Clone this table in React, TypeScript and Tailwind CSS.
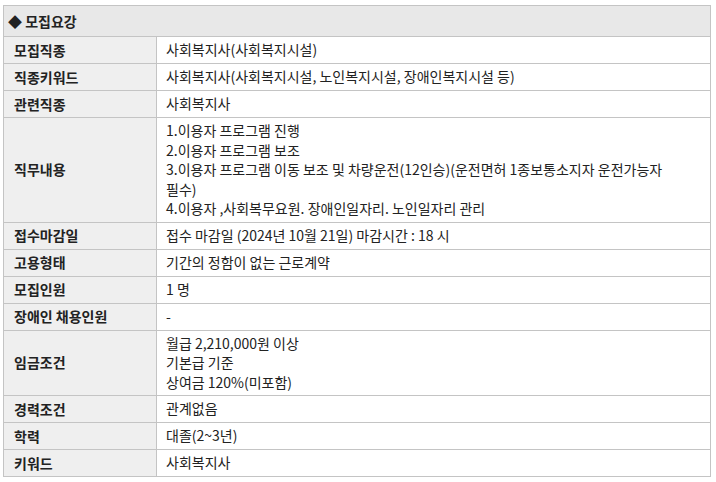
const rows: { label: string; lines: string[] }[] = [
  { label: '모집직종', lines: ['사회복지사(사회복지시설)'] },
  { label: '직종키워드', lines: ['사회복지사(사회복지시설, 노인복지시설, 장애인복지시설 등)'] },
  { label: '관련직종', lines: ['사회복지사'] },
  {
    label: '직무내용',
    lines: [
      '1.이용자 프로그램 진행',
      '2.이용자 프로그램 보조',
      '3.이용자 프로그램 이동 보조 및 차량운전(12인승)(운전면허 1종보통소지자 운전가능자',
      '필수)',
      '4.이용자 ,사회복무요원. 장애인일자리. 노인일자리 관리',
    ],
  },
  { label: '접수마감일', lines: ['접수 마감일 (2024년 10월 21일) 마감시간 : 18 시'] },
  { label: '고용형태', lines: ['기간의 정함이 없는 근로계약'] },
  { label: '모집인원', lines: ['1 명'] },
  { label: '장애인 채용인원', lines: ['-'] },
  { label: '임금조건', lines: ['월급 2,210,000원 이상', '기본급 기준', '상여금 120%(미포함)'] },
  { label: '경력조건', lines: ['관계없음'] },
  { label: '학력', lines: ['대졸(2~3년)'] },
  { label: '키워드', lines: ['사회복지사'] },
];

export default function App() {
  return (
    <div className="bg-white w-[716px] h-[482px] pt-[5px] pl-[3px] font-['Noto_Sans_CJK_KR','Noto_Sans',sans-serif] text-[14px] text-[#222]">
      <table className="w-[708px] border-collapse table-fixed">
        <colgroup>
          <col className="w-[153px]" />
          <col />
        </colgroup>
        <thead>
          <tr>
            <th colSpan={2} className="h-[31px] border border-[#c4c4c4] bg-[#e8e8e8] px-[4px] text-left font-bold">
              ◆ 모집요강
            </th>
          </tr>
        </thead>
        <tbody>
          {rows.map((r) => (
            <tr key={r.label}>
              <th className="h-[27px] border border-[#c4c4c4] bg-[#efefef] pl-[10px] text-left font-bold">
                {r.label}
              </th>
              <td className="border border-[#c4c4c4] px-[9px] py-[3px] leading-[19.5px] whitespace-nowrap">
                {r.lines.map((l, i) => (
                  <div key={i}>{l}</div>
                ))}
              </td>
            </tr>
          ))}
        </tbody>
      </table>
    </div>
  );
}
